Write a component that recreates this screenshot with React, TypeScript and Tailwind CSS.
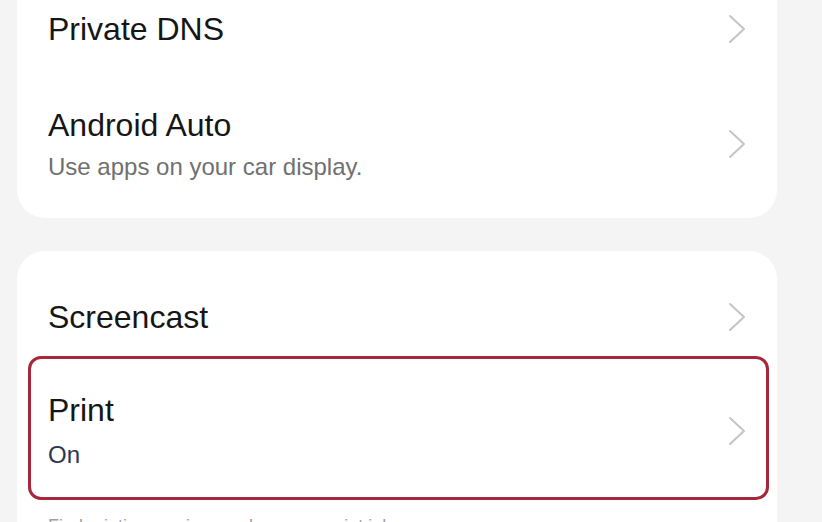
const font = { fontFamily: '"Liberation Sans", Arial, sans-serif' };

function Chevron() {
  return (
    <svg width="20" height="30" viewBox="0 0 20 30" fill="none" className="shrink-0">
      <path d="M3 2 L17 15 L3 28" stroke="#c4c4c4" strokeWidth="2" strokeLinecap="round" strokeLinejoin="round" />
    </svg>
  );
}

function Row({ title, subtitle }: { title: string; subtitle?: string }) {
  return (
    <div className="flex items-center justify-between">
      <div className="flex flex-col">
        <span className="text-[32px] leading-[38px] text-[#161616]">{title}</span>
        {subtitle && <span className="mt-[8px] text-[24px] leading-[30px] text-[#707070]">{subtitle}</span>}
      </div>
      <Chevron />
    </div>
  );
}

export default function App() {
  return (
    <div className="h-[522px] w-[822px] overflow-hidden bg-[#f4f4f4] antialiased" style={font}>
      <div className="ml-[17px] mt-[-30px] w-[760px] rounded-[28px] bg-white pb-[36px] pl-[31px] pr-[30px] pt-[40px]">
        <Row title="Private DNS" />
        <div className="mt-[58px]">
          <Row title="Android Auto" subtitle="Use apps on your car display." />
        </div>
      </div>

      <div className="ml-[17px] mt-[33px] w-[760px] rounded-[28px] bg-white pb-[40px] pt-[47px]">
        <div className="pl-[31px] pr-[30px]">
          <Row title="Screencast" />
        </div>
        <div className="ml-[11px] mr-[8px] mt-[20px] rounded-[13px] border-[3px] border-[#a82639] pb-[27px] pl-[17px] pr-[19px] pt-[32px]">
          <div className="flex items-center justify-between">
            <div className="flex flex-col">
              <span className="text-[32px] leading-[38px] text-[#161616]">Print</span>
              <span className="mt-[11px] text-[24px] leading-[30px] text-[#2c3654]">On</span>
            </div>
            <Chevron />
          </div>
        </div>
        <div className="mt-[14px] pl-[31px] text-[18px] leading-[24px] text-[#a0a0a0]">
          Find printing services and manage print jobs.
        </div>
      </div>
    </div>
  );
}
